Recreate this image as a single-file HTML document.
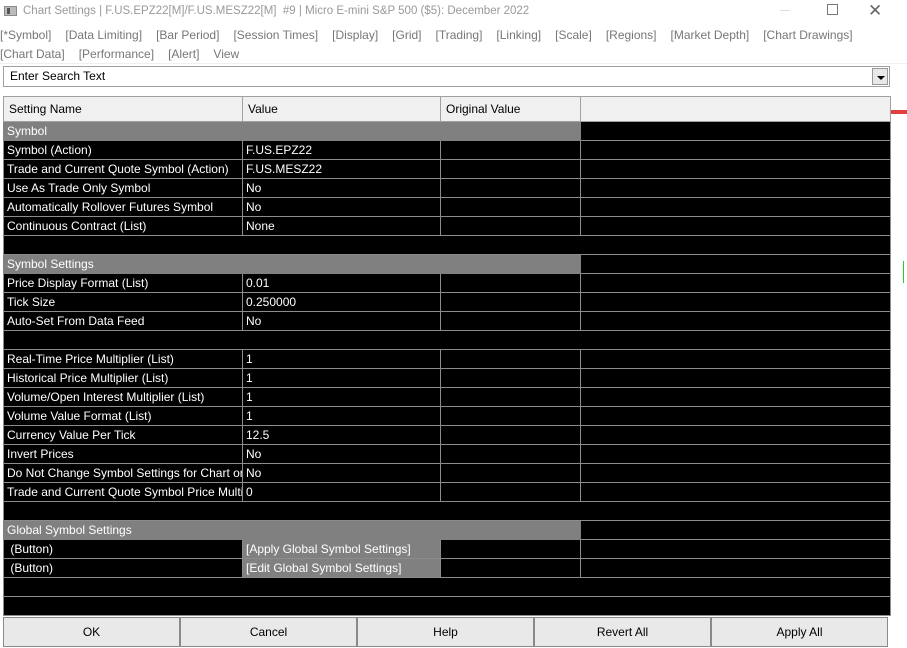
<!DOCTYPE html>
<html><head><style>
*{margin:0;padding:0;box-sizing:border-box}
body{width:907px;height:648px;background:#fff;font-family:"Liberation Sans",sans-serif;font-size:12px;position:relative;overflow:hidden}
.t{position:absolute;left:0;top:0;width:907px;height:22px;color:#999;font-size:11.5px;line-height:22px;padding-left:23px}
.ic{position:absolute;left:4px;top:6px;width:13px;height:10px;border:1px solid #8a8a8a;background:#bbb}
.ic:after{content:"";position:absolute;left:2px;top:1px;width:3px;height:6px;background:#555}
.m{position:absolute;left:0;color:#777;font-size:12px;white-space:nowrap;word-spacing:0}
.m span{margin-right:14px}
.s{position:absolute;left:3px;top:66px;width:887px;height:21px;border:1px solid #a0a0a0;background:#fff;padding-left:6px;line-height:19px;color:#000}
.dd{position:absolute;right:1px;top:1px;width:16px;height:17px;background:#e8e8e8;border:1px solid #999}
.dd:after{content:"";position:absolute;left:4px;top:7px;border-left:4px solid transparent;border-right:4px solid transparent;border-top:4px solid #000}
table{position:absolute;left:3px;top:96px;border-collapse:collapse;table-layout:fixed;width:888px}
td{height:19px;border:1px solid #8c8c8c;color:#fff;background:#000;padding-left:3px;white-space:nowrap;overflow:hidden;font-size:12px;line-height:17px}
tr.h td{height:25px;background:#f0f0f0;color:#000;border-color:#a0a0a0;padding-left:5px}
td.g{background:#808080}
tr.sec td.g{border-color:#808080}
.b{position:absolute;top:617px;height:30px;width:177px;background:#e9e9e9;border:1px solid #8a8a8a;text-align:center;line-height:28px;color:#000}
.rb{position:absolute;left:891px;top:96px;width:16px;height:552px;background:#fff}
</style></head><body>
<div class="t"><div class="ic"></div>Chart Settings | F.US.EPZ22[M]/F.US.MESZ22[M]&nbsp; #9 | Micro E-mini S&amp;P 500 ($5): December 2022</div>
<div style="position:absolute;left:780px;top:10px;width:10px;height:1px;background:#ddd"></div>
<div style="position:absolute;left:827px;top:4px;width:11px;height:11px;border:1px solid #777"></div>
<div style="position:absolute;left:868px;top:0;font-size:17px;color:#666;line-height:22px">✕</div>
<div class="m" style="top:28px"><span>[*Symbol]</span><span>[Data Limiting]</span><span>[Bar Period]</span><span>[Session Times]</span><span>[Display]</span><span>[Grid]</span><span>[Trading]</span><span>[Linking]</span><span>[Scale]</span><span>[Regions]</span><span>[Market Depth]</span><span>[Chart Drawings]</span></div>
<div class="m" style="top:47px"><span>[Chart Data]</span><span>[Performance]</span><span>[Alert]</span><span>View</span></div>
<div style="position:absolute;left:0;top:63px;width:907px;height:1px;background:#f0f0f0"></div>
<div class="s">Enter Search Text<div class="dd"></div></div>
<table>
<colgroup><col style="width:239px"><col style="width:198px"><col style="width:140px"><col></colgroup>
<tr class="h"><td>Setting Name</td><td>Value</td><td>Original Value</td><td></td></tr>
<tr class="sec"><td class="g" colspan="3">Symbol</td><td></td></tr>
<tr><td>Symbol (Action)</td><td>F.US.EPZ22</td><td></td><td></td></tr>
<tr><td>Trade and Current Quote Symbol (Action)</td><td>F.US.MESZ22</td><td></td><td></td></tr>
<tr><td>Use As Trade Only Symbol</td><td>No</td><td></td><td></td></tr>
<tr><td>Automatically Rollover Futures Symbol</td><td>No</td><td></td><td></td></tr>
<tr><td>Continuous Contract (List)</td><td>None</td><td></td><td></td></tr>
<tr><td colspan="4"></td></tr>
<tr class="sec"><td class="g" colspan="3">Symbol Settings</td><td></td></tr>
<tr><td>Price Display Format (List)</td><td>0.01</td><td></td><td></td></tr>
<tr><td>Tick Size</td><td>0.250000</td><td></td><td></td></tr>
<tr><td>Auto-Set From Data Feed</td><td>No</td><td></td><td></td></tr>
<tr><td colspan="4"></td></tr>
<tr><td>Real-Time Price Multiplier (List)</td><td>1</td><td></td><td></td></tr>
<tr><td>Historical Price Multiplier (List)</td><td>1</td><td></td><td></td></tr>
<tr><td>Volume/Open Interest Multiplier (List)</td><td>1</td><td></td><td></td></tr>
<tr><td>Volume Value Format (List)</td><td>1</td><td></td><td></td></tr>
<tr><td>Currency Value Per Tick</td><td>12.5</td><td></td><td></td></tr>
<tr><td>Invert Prices</td><td>No</td><td></td><td></td></tr>
<tr><td>Do Not Change Symbol Settings for Chart or Study</td><td>No</td><td></td><td></td></tr>
<tr><td>Trade and Current Quote Symbol Price Multiplier</td><td>0</td><td></td><td></td></tr>
<tr><td colspan="4"></td></tr>
<tr class="sec"><td class="g" colspan="3">Global Symbol Settings</td><td></td></tr>
<tr><td>&nbsp;(Button)</td><td class="g">[Apply Global Symbol Settings]</td><td></td><td></td></tr>
<tr><td>&nbsp;(Button)</td><td class="g">[Edit Global Symbol Settings]</td><td></td><td></td></tr>
<tr><td colspan="4"></td></tr>
<tr><td colspan="4"></td></tr>
</table>
<div class="rb"><div style="position:absolute;left:0;top:14px;width:16px;height:4px;background:#e04040"></div><div style="position:absolute;left:12px;top:165px;width:1px;height:22px;background:#2c2"></div></div>
<div class="b" style="left:3px">OK</div>
<div class="b" style="left:180px">Cancel</div>
<div class="b" style="left:357px">Help</div>
<div class="b" style="left:534px">Revert All</div>
<div class="b" style="left:711px">Apply All</div>
</body></html>
